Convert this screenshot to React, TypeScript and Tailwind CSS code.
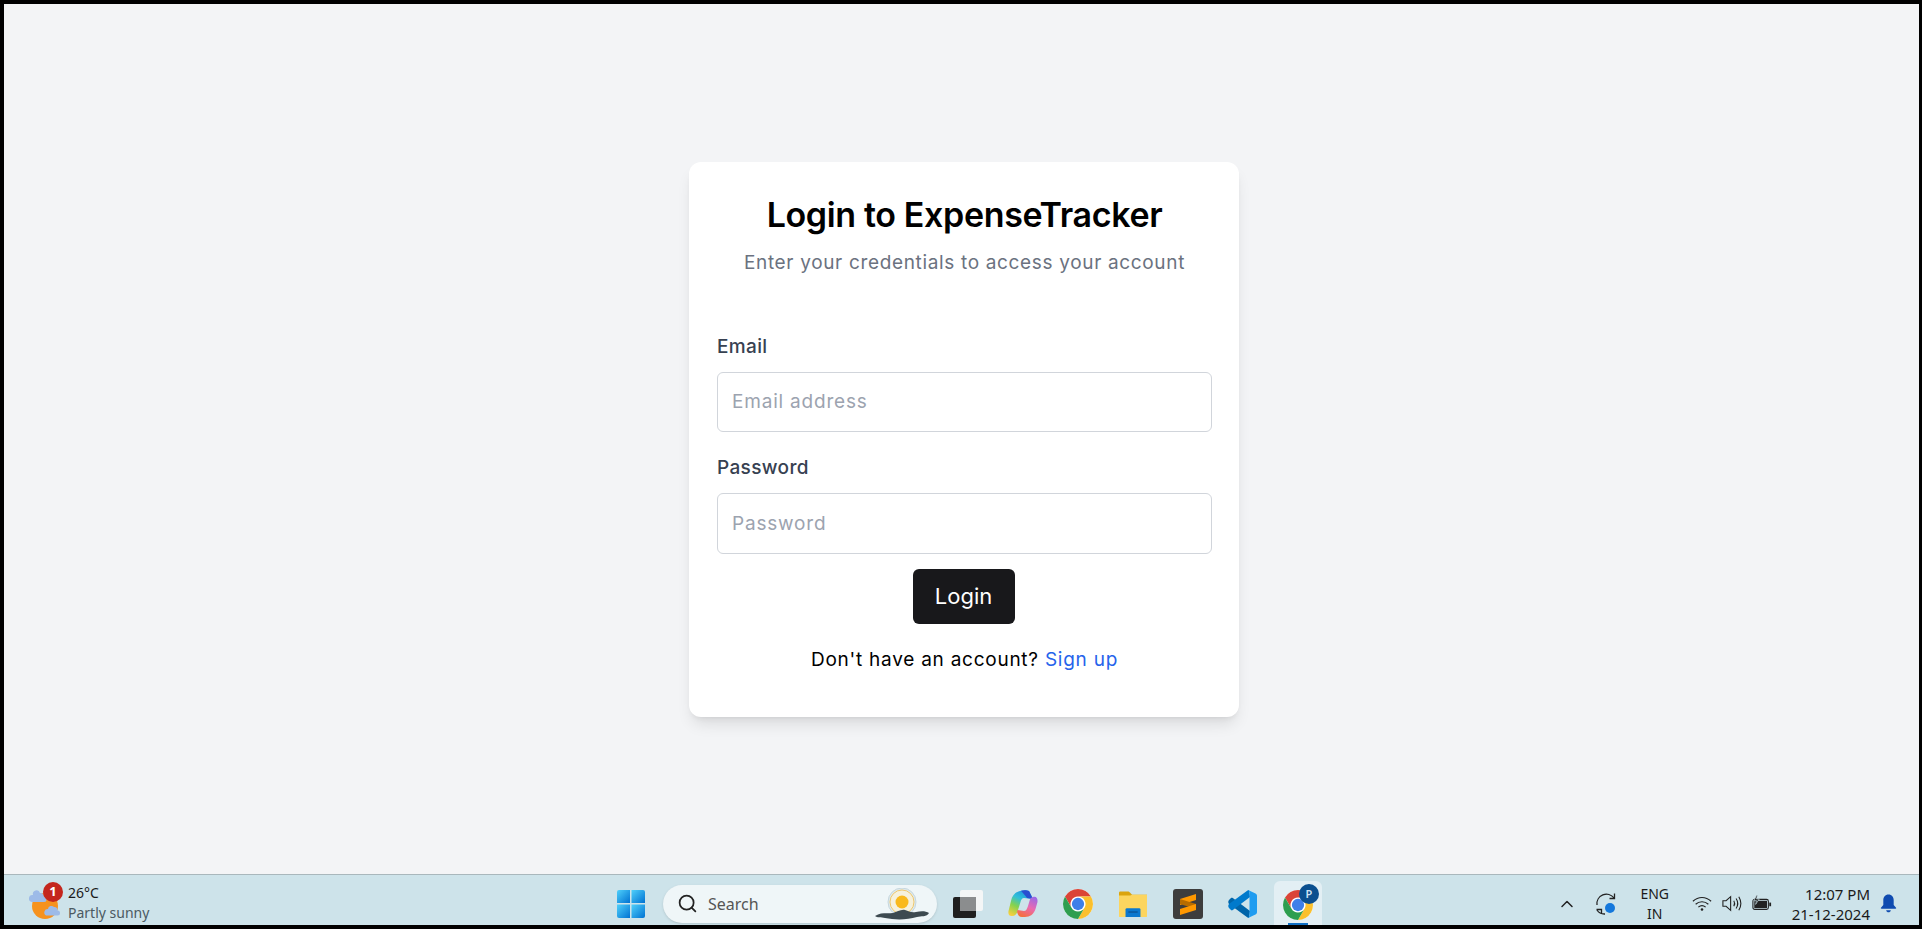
import { ChevronUp, Search } from "lucide-react";

function ChromeIcon() {
  const wedge = "M43.05 13A22 22 0 0 0 4.95 13L14.47 29.5A11 11 0 0 1 24 13Z";
  return (
    <svg viewBox="2 2 44 44" className="w-[30px] h-[30px]">
      <circle cx="24" cy="24" r="22" fill="#fff" />
      <path d={wedge} fill="#db4437" />
      <path d={wedge} fill="#fbc02d" transform="rotate(120 24 24)" />
      <path d={wedge} fill="#2e9e4f" transform="rotate(240 24 24)" />
      <circle cx="24" cy="24" r="9" fill="#3f7fe8" />
    </svg>
  );
}

function WindowsIcon() {
  return (
    <svg viewBox="0 0 30 30" className="w-[30px] h-[30px]">
      <defs>
        <linearGradient id="win" x1="0" y1="0" x2="1" y2="1">
          <stop offset="0" stopColor="#4fd0fb" />
          <stop offset="1" stopColor="#0072d2" />
        </linearGradient>
      </defs>
      <path d="M1 3a2 2 0 0 1 2-2h11v13H1z" fill="url(#win)" />
      <path d="M15.500 1H27a2 2 0 0 1 2 2v11H15.500z" fill="url(#win)" />
      <path d="M1 15.500h13V29H3a2 2 0 0 1-2-2z" fill="url(#win)" />
      <path d="M15.500 15.500H29V27a2 2 0 0 1-2 2H15.500z" fill="url(#win)" />
    </svg>
  );
}

function SunIcon() {
  return (
    <svg viewBox="0 0 56 34" className="w-[56px] h-[34px]">
      <circle cx="28" cy="14" r="14" fill="#dfe9ea" stroke="#c6d7df" />
      <circle cx="28" cy="14" r="12" fill="#f6f1dc" stroke="#f0c86c" />
      <circle cx="28" cy="14" r="6.500" fill="#f9b91c" />
      <path d="M1 28c6-4 12-2 18-3 4-1 8-4 12-3 4 1 6 3 11 2 5-1 10-1 13 1-2 4-8 3-12 4-10 3-22 3-32 1-4-1-8 0-10-2z" fill="#3d4a50" />
    </svg>
  );
}

function TaskViewIcon() {
  return (
    <svg viewBox="0 0 30 30" className="w-[30px] h-[30px]">
      <rect x="7" y="1" width="23" height="21" rx="2" fill="#f4f6f6" />
      <rect x="0" y="8" width="23" height="21" rx="2" fill="#1f1f1f" />
      <rect x="7" y="8" width="16" height="14" fill="#8b8d8e" />
    </svg>
  );
}

function CopilotIcon() {
  return (
    <svg viewBox="0 0 30 28" className="w-[30px] h-[28px]">
      <defs>
        <linearGradient id="cpl" x1="0.7" y1="0" x2="0.2" y2="1">
          <stop offset="0" stopColor="#1f8ee0" />
          <stop offset="0.35" stopColor="#2fc0d8" />
          <stop offset="0.65" stopColor="#84d24f" />
          <stop offset="1" stopColor="#f6cf3c" />
        </linearGradient>
        <linearGradient id="cpr" x1="0.8" y1="0" x2="0.3" y2="1">
          <stop offset="0" stopColor="#9a6ae6" />
          <stop offset="0.5" stopColor="#ea6ab0" />
          <stop offset="1" stopColor="#f5703c" />
        </linearGradient>
      </defs>
      <path d="M12 1C15 0 19 0 21 1L25 9 16 8C14 8 13 10 12.500 12L10 20C9 24 7 26 4 26 1 26 0 24 .5 21L3 11C4 6 7 2 12 1Z" fill="url(#cpl)" />
      <path d="M13 .7C15 0 19 0 21 1L25 9 19 8C17 5 15 3 13 .7Z" fill="#2a4fd0" />
      <path d="M25 7C28 6 30 8 29.500 12L27.500 19C26 24 22 27 17 27H14C11 27 10 25 9 22L9.500 20 16 21C18 21 19 19 20 16L21.500 11C22 8.500 23 7.500 25 7Z" fill="url(#cpr)" />
    </svg>
  );
}

function FolderIcon() {
  return (
    <svg viewBox="0 0 30 30" className="w-[30px] h-[28px]">
      <path d="M0 3a1.500 1.500 0 0 1 1.500-1.500h8c1 0 1.500.5 2.500 1.500l2 2H30v5H0z" fill="#dba40e" />
      <path d="M0 6h12l2-1h16v23a1 1 0 0 1-1 1H1a1 1 0 0 1-1-1z" fill="#fcd55f" />
      <path d="M7 21a1.500 1.500 0 0 1 1.500-1.500h13A1.500 1.500 0 0 1 23 21v8H7z" fill="#0a78cf" />
      <rect x="10" y="23" width="10" height="1.200" fill="#0b4d8a" />
    </svg>
  );
}

function SublimeIcon() {
  return (
    <svg viewBox="0 0 30 30" className="w-[30px] h-[30px]">
      <rect width="30" height="30" rx="3" fill="#3d3d3d" />
      <path d="M23 5v6L7 16v-6z" fill="#ff9800" />
      <path d="M7 10l16 5v5L7 15z" fill="#b76c00" />
      <path d="M23 15v6L7 26v-6z" fill="#ff9800" />
    </svg>
  );
}

function VsCodeIcon() {
  return (
    <svg viewBox="0 0 30 30" className="w-[30px] h-[30px]">
      <path d="M1 11l2-2c.5-.5 1.200-.5 1.800 0L22 22l-1 7-1.500-.5L1 15c-1-1-1-3 0-4z" fill="#0065a9" />
      <path d="M1 19l2 2c.5.5 1.200.5 1.800 0L22 8l-1-7-1.500.5L1 15c-1 1-1 3 0 4z" fill="#007acc" />
      <path d="M20 1l7.500 3.500c1 .5 1.500 1.300 1.500 2.500v16c0 1.200-.5 2-1.500 2.500L20 29c.8-.8 1.500-2 1.500-3V4c0-1-.7-2.200-1.500-3z" fill="#1f9cf0" />
    </svg>
  );
}

function WeatherIcon() {
  return (
    <svg viewBox="0 0 32 36" className="w-[32px] h-[36px]">
      <circle cx="17" cy="21" r="13" fill="#f6921e" />
      <path d="M5 10a3.500 3.500 0 0 1 7-2 3.500 3.500 0 0 1 4 4 2.500 2.500 0 0 1 0 5H4a3.500 3.500 0 0 1 1-7z" fill="#9dbbe8" />
      <path d="M20 24a3.500 3.500 0 0 1 6-2 3 3 0 0 1 3.500 3.500 2.500 2.500 0 0 1 0 5H18a3.500 3.500 0 0 1 2-6.500z" fill="#9dbbe8" />
    </svg>
  );
}

function SyncIcon() {
  return (
    <svg viewBox="0 0 24 24" className="w-[24px] h-[24px]" fill="none" stroke="#222" strokeWidth="1.300">
      <path d="M2 13a9.500 9.500 0 0 1 17-7" />
      <path d="M19.500 1.500V6.500H14.500" />
      <path d="M1.500 17.500h5v4.500" />
      <path d="M2 18a9 9 0 0 0 8 4" />
      <circle cx="15" cy="16" r="5" fill="#1478dc" stroke="none" />
    </svg>
  );
}

function WifiIcon() {
  return (
    <svg viewBox="0 0 22 18" className="w-[20px] h-[17px]" fill="none" stroke="#222" strokeWidth="1.300">
      <path d="M1 6.500c6-5.500 14-5.500 20 0" />
      <path d="M4 9.800c4-3.600 10-3.600 14 0" />
      <path d="M7 13c2.300-2 5.700-2 8 0" />
      <circle cx="11" cy="15.500" r="1.400" fill="#222" stroke="none" />
    </svg>
  );
}

function VolumeIcon() {
  return (
    <svg viewBox="0 0 22 18" className="w-[20px] h-[17px]" fill="none" stroke="#222" strokeWidth="1.200">
      <path d="M1 6h3.500L9.500 1.500v15L4.500 12H1z" />
      <path d="M13 6c1.200 2 1.200 4 0 6" />
      <path d="M15.500 3.500c2.300 3.500 2.300 7.500 0 11" />
      <path d="M18.500 1.500c3 5 3 10 0 15" />
    </svg>
  );
}

function BatteryIcon() {
  return (
    <svg viewBox="0 0 22 18" className="w-[20px] h-[17px]">
      <rect x="1" y="4.500" width="17" height="11" rx="2" fill="none" stroke="#222" strokeWidth="1.200" />
      <rect x="2.500" y="6" width="14" height="8" fill="#222" />
      <rect x="19" y="8" width="2" height="4" fill="#222" />
      <path d="M5 0L2 6h3l-1 4 4-6H5l1-4z" fill="#222" stroke="#cde3ea" strokeWidth=".7" />
    </svg>
  );
}

function BellIcon() {
  return (
    <svg viewBox="0 0 18 20" className="w-[17px] h-[20px]">
      <path d="M9 0c3.500 0 5.500 2.600 5.500 6v5l2.500 3c.3.600 0 1-.6 1H1.600c-.6 0-.9-.4-.6-1l2.500-3V6C3.500 2.600 5.500 0 9 0z" fill="#0f4bb0" />
      <path d="M6.500 16.500h5c-.4 1.500-1.300 2.200-2.500 2.200s-2.100-.7-2.500-2.200z" fill="#0f4bb0" />
    </svg>
  );
}

export default function App() {
  return (
    <div className="h-[929px] w-full border-t-4 border-l-4 border-r-[3px] border-b-4 border-black flex flex-col bg-[#f3f4f6] font-['Inter',sans-serif] overflow-hidden">
      <main className="flex-1 flex items-center justify-center pl-[5px]">
        <div className="w-[550px] h-[555px] bg-white rounded-xl shadow-lg pl-7 pr-[27px] pt-[33px]">
          <h1 className="text-[34px] leading-[40px] font-semibold text-black text-center tracking-[-0.35px]">
            Login to ExpenseTracker
          </h1>
          <p className="mt-[16px] text-[19px] leading-6 text-[#6b7280] text-center tracking-[0.66px]">
            Enter your credentials to access your account
          </p>
          <form className="mt-[60px]">
            <label className="block text-[19px] leading-6 font-medium text-[#374151] tracking-[0.35px]">Email</label>
            <input
              placeholder="Email address"
              className="mt-[13px] block w-full h-[60px] px-[14px] border border-[#d1d5db] rounded-md text-[19px] tracking-[0.8px] placeholder:text-[#9ca3af] bg-white"
            />
            <label className="mt-[24px] block text-[19px] leading-6 font-medium text-[#374151] tracking-[0.35px]">Password</label>
            <input
              placeholder="Password"
              className="mt-[13px] block w-full h-[61px] px-[14px] border border-[#d1d5db] rounded-md text-[19px] tracking-[0.8px] placeholder:text-[#9ca3af] bg-white"
            />
            <div className="mt-[15px] flex justify-center pr-[2px]">
              <button type="button" className="w-[102px] h-[55px] rounded-md bg-[#18181b] text-white text-[22px]">
                Login
              </button>
            </div>
            <p className="mt-[24px] text-center text-[19px] leading-6 text-black tracking-[0.75px]">
              Don't have an account? <a className="text-[#2563eb]">Sign up</a>
            </p>
          </form>
        </div>
      </main>
      <footer className="h-[51px] shrink-0 border-t border-[#a9b7bc] bg-[#cde3ea] grid grid-cols-[1fr_auto_1fr] font-['Noto_Sans',sans-serif] text-[#1a1a1a]">
        <div className="flex items-center pl-6 pt-[5px] gap-2">
          <div className="relative">
            <WeatherIcon />
            <span className="absolute -top-[3px] left-[15px] w-5 h-5 rounded-full bg-[#c4261d] text-white text-[13px] font-bold flex items-center justify-center">
              1
            </span>
          </div>
          <div className="text-[14px] leading-5">
            <div>26°C</div>
            <div className="text-[#4b5a62]">Partly sunny</div>
          </div>
        </div>
        <div className="flex items-center pl-[15px] pt-[6px]">
          <WindowsIcon />
          <div className="ml-[17px] w-[274px] h-[38px] rounded-full bg-[#eff6f8] flex items-center pl-[14px] pr-[7px] shadow-sm">
            <Search className="w-[21px] h-[21px] text-[#222]" strokeWidth={2} />
            <span className="ml-[10px] text-[16px] text-[#555]">Search</span>
            <div className="ml-auto pt-[2px]">
              <SunIcon />
            </div>
          </div>
          <div className="ml-4 flex items-center gap-[25px]">
            <TaskViewIcon />
            <CopilotIcon />
            <ChromeIcon />
            <FolderIcon />
            <SublimeIcon />
            <VsCodeIcon />
          </div>
          <div className="relative ml-4 w-12 h-[45px] self-end pt-[3px] rounded-t-md bg-[#e3eff4] flex items-center justify-center">
            <ChromeIcon />
            <span className="absolute top-[3px] right-[3px] w-5 h-5 rounded-full bg-[#0b4f8f] text-[#cfe2f3] text-[11px] font-semibold flex items-center justify-center">
              P
            </span>
            <span className="absolute bottom-0 left-[14px] w-5 h-[3px] bg-[#0f6fc4]" />
          </div>
        </div>
        <div className="flex items-center justify-end pr-[22px] pt-[6px]">
          <ChevronUp className="w-5 h-5 text-[#222]" strokeWidth={1.800} />
          <div className="ml-[18px]">
            <SyncIcon />
          </div>
          <div className="ml-[14px] w-[44px] text-center text-[14px] leading-5">
            <div>ENG</div>
            <div>IN</div>
          </div>
          <div className="ml-[15px] flex items-center gap-[10px]">
            <WifiIcon />
            <VolumeIcon />
            <BatteryIcon />
          </div>
          <div className="ml-[20px] text-right text-[15px] leading-5">
            <div>12:07 PM</div>
            <div>21-12-2024</div>
          </div>
          <div className="ml-[10px]">
            <BellIcon />
          </div>
        </div>
      </footer>
    </div>
  );
}
